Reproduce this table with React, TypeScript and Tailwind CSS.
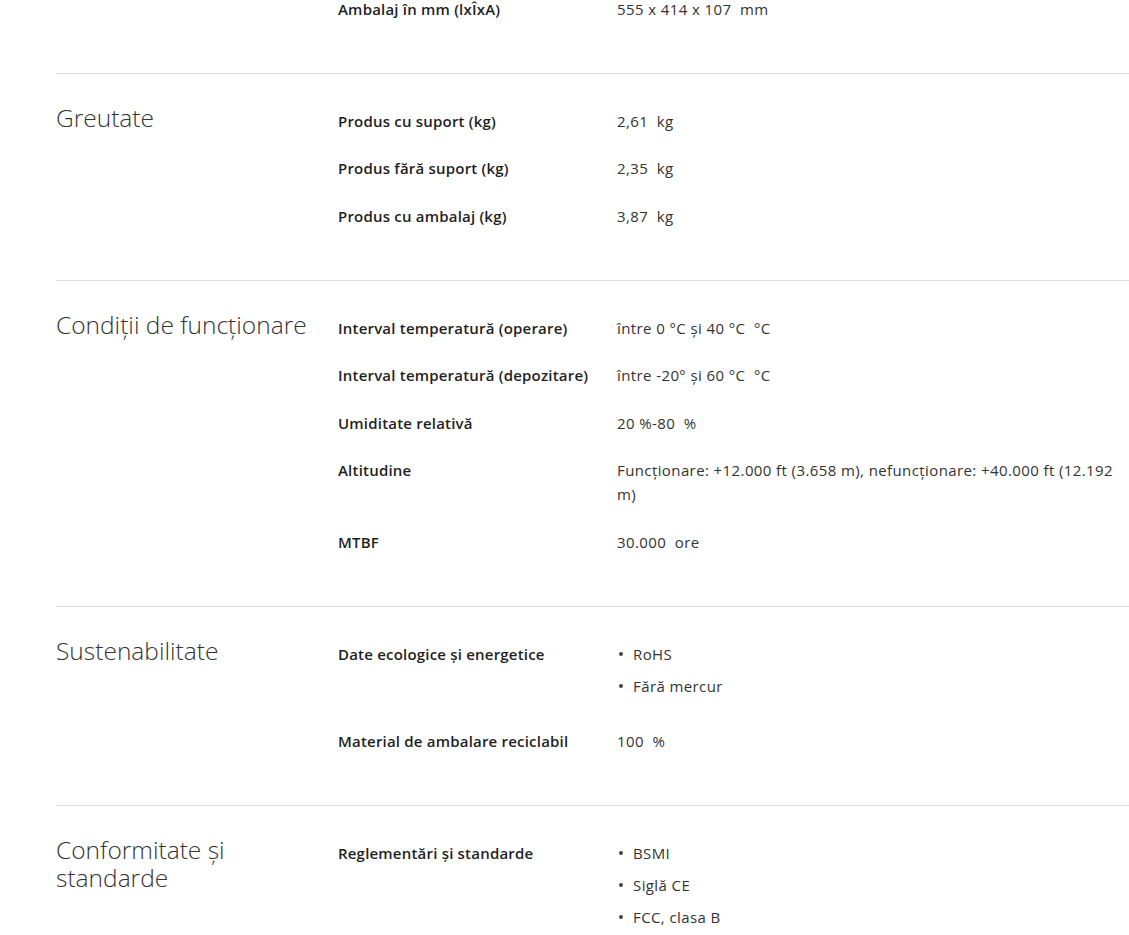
import React from 'react';

type Spec = { label: string; value?: string; list?: string[] };
type Section = { title?: string; specs: Spec[] };

const sections: Section[] = [
  { specs: [{ label: 'Ambalaj în mm (lxÎxA)', value: '555 x 414 x 107  mm' }] },
  {
    title: 'Greutate',
    specs: [
      { label: 'Produs cu suport (kg)', value: '2,61  kg' },
      { label: 'Produs fără suport (kg)', value: '2,35  kg' },
      { label: 'Produs cu ambalaj (kg)', value: '3,87  kg' },
    ],
  },
  {
    title: 'Condiții de funcționare',
    specs: [
      { label: 'Interval temperatură (operare)', value: 'între 0 °C și 40 °C  °C' },
      { label: 'Interval temperatură (depozitare)', value: 'între -20° și 60 °C  °C' },
      { label: 'Umiditate relativă', value: '20 %-80  %' },
      { label: 'Altitudine', value: 'Funcționare: +12.000 ft (3.658 m), nefuncționare: +40.000 ft (12.192 m)' },
      { label: 'MTBF', value: '30.000  ore' },
    ],
  },
  {
    title: 'Sustenabilitate',
    specs: [
      { label: 'Date ecologice și energetice', list: ['RoHS', 'Fără mercur'] },
      { label: 'Material de ambalare reciclabil', value: '100  %' },
    ],
  },
  {
    title: 'Conformitate și standarde',
    specs: [{ label: 'Reglementări și standarde', list: ['BSMI', 'Siglă CE', 'FCC, clasa B'] }],
  },
];

const SpecRow: React.FC<{ spec: Spec }> = ({ spec }) => (
  <div className="flex mb-[23.5px]">
    <div className="w-[279px] shrink-0 pr-4 font-semibold tracking-[0.2px] text-[#1f1f1f]">{spec.label}</div>
    <div className="flex-1 text-[#333333] tracking-[0.4px] whitespace-pre-wrap">
      {spec.list ? (
        <ul>
          {spec.list.map(item => (
            <li key={item} className="flex items-center mb-2">
              <span className="w-[16px] shrink-0 flex">
                <span className="ml-[2px] w-[4px] h-[4px] rounded-full bg-[#444444]" />
              </span>
              {item}
            </li>
          ))}
        </ul>
      ) : (
        spec.value
      )}
    </div>
  </div>
);

export default function App() {
  return (
    <div
      className="bg-white h-screen pl-[56px] overflow-hidden text-[15px] leading-[24px]"
      style={{ fontFamily: '"Open Sans", "Liberation Sans", sans-serif' }}
    >
      {sections.map((section, i) => (
        <div
          key={i}
          className={
            i === 0
              ? 'flex -mt-[3px] pb-[28px]'
              : 'flex border-t border-[#dcdcdc] pt-[35px] pb-[28.5px]'
          }
        >
          <div className="w-[282px] shrink-0 pr-6">
            {section.title && (
              <h2 className="-mt-[5px] text-[24.5px] leading-[28px] font-light text-[#333333]">
                {section.title}
              </h2>
            )}
          </div>
          <div className="flex-1">
            {section.specs.map(spec => (
              <SpecRow key={spec.label} spec={spec} />
            ))}
          </div>
        </div>
      ))}
    </div>
  );
}
